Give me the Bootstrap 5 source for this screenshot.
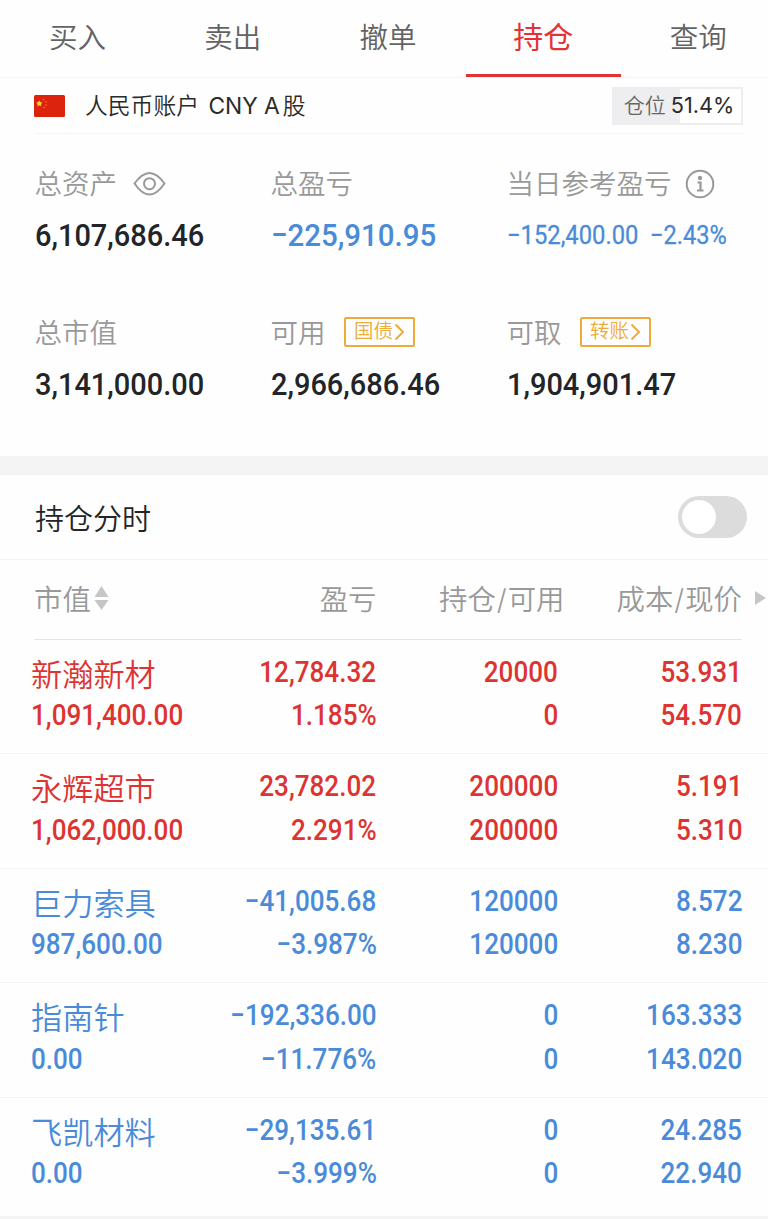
<!DOCTYPE html>
<html lang="zh-CN">
<head>
<meta charset="utf-8">
<meta name="viewport" content="width=device-width, initial-scale=1">
<title>持仓</title>
<link href="https://cdn.jsdelivr.net/npm/bootstrap@5.3.0/dist/css/bootstrap.min.css" rel="stylesheet">
<style>
  :root { --up: #dd3431; --down: #4a8bd9; --rule: #f3f3f3; }
  html, body { overflow: hidden; }
  body { width: 768px; height: 1219px; background: #fefefe; color: #222428; font-family: Inter, "Noto Sans CJK SC", sans-serif; font-weight: 350; }
  .tabs { height: 78px; border-bottom: 1.5px solid #f5f5f5; overflow: hidden; }
  .tabs a { flex: 0 0 155.2px; height: 77.5px; line-height: 75px; font-size: 28.5px; color: #636363; text-align: center; text-decoration: none; border-bottom: 4px solid transparent; }
  .tabs a.on { color: #e33233; border-color: #e33233; font-size: 30px; font-weight: 400; }
  .acct { height: 56px; margin: 0 25px 0 34px; border-bottom: 1.5px solid #f5f5f5; }
  .acct-name { font-size: 22.8px; margin: 2px 0 0 20px; color: #2b2b2b; white-space: nowrap; }
  .acct-name span { letter-spacing: 0; font-weight: 400; margin: 0 3px; }
  .usage { width: 131px; height: 38px; border: 2px solid #eeeef0; font-size: 21px; color: #666; background: linear-gradient(90deg, #eeeef0 66px, #fff 66px); white-space: nowrap; padding-left: 3px; }
  .usage b { font-weight: 400; font-size: 21.7px; color: #2a2a2a; margin-left: 5px; }
  .summary { display: grid; grid-template-columns: 236px 236px 1fr; padding: 0 0 0 34.500px; height: 322px; grid-template-rows: 149px 1fr; }
  .lbl { height: 40px; margin-top: 31px; font-size: 27.5px; color: #999; white-space: nowrap; display: flex; align-items: center; }
  .lbl svg { position: relative; top: -1px; }
  .num { display: inline-block; font-family: Roboto, sans-serif; font-weight: 500; transform: scaleX(.905); transform-origin: left center; white-space: nowrap; }
  .big { height: 40px; line-height: 40px; margin-top: 10px; font-size: 32px; }
  .big .num { display: block; }
  .big.down:not(.mid) .num { transform: scaleX(.92); }
  .mid .num { font-size: 25.5px; font-weight: 400; transform: scaleX(.932); -webkit-text-stroke: .3px currentColor; }
  .mid .pct { margin-left: 3px; transform: scaleX(.925); }
  .chip { font-size: 19.5px; height: 30px; width: 71px; border: 2px solid #edab3c; border-radius: 2px; color: #edab3c; margin: -5px 0 0 18.5px; font-weight: 350; }
  .lbl .chip svg { top: 0; }
  .band { height: 19px; background: #f4f4f4; }
  .timeline { height: 84.5px; padding: 0 21px 0 35px; border-bottom: 1.5px solid var(--rule); font-size: 29px; }
  .timeline .ttl { padding-top: 5px; }
  .toggle { width: 69px; height: 42px; border-radius: 21px; background: #dcdcdc; padding: 4px; }
  .toggle i { display: block; width: 34px; height: 34px; border-radius: 50%; background: #fff; }
  .head, .pos { display: grid; margin-left: 31px; margin-right: 26px; }
  .head { height: 80px; margin-left: 34px; grid-template-columns: 157px 185.500px 188px 177.500px; font-size: 28.4px; color: #999; line-height: 80px; border-bottom: 1px solid #e5e5e5; white-space: nowrap; }
  .head em { font-style: normal; margin: 0 1px; }
  .pos { height: 113.5px; padding-top: 10px; grid-template-columns: 160px 185.500px 181.500px 184px; grid-template-rows: 43.5px 43.5px; line-height: 43.500px; font-size: 28.8px; }
  .wrap-pos { border-bottom: 1.2px solid var(--rule); height: 114.6px; }
  .pos .nm { font-size: 31.2px; position: relative; top: 4px; white-space: nowrap; }
  .pos .text-end .num { transform-origin: right center; }
  .up { color: var(--up); } .down { color: var(--down); }
</style>
</head>
<body>
<nav class="tabs d-flex">
  <a href="#">买入</a><a href="#">卖出</a><a href="#">撤单</a><a href="#" class="on">持仓</a><a href="#">查询</a>
</nav>
<div class="acct d-flex align-items-center">
  <svg width="31" height="22" viewBox="0 0 31 22"><rect width="31" height="22" rx="1.5" fill="#dc230d"/><path fill="#fc3" d="M5.3 5.2l.9 2.3 2.4.1-1.9 1.5.7 2.4-2.1-1.4-2 1.4.6-2.4L2 7.600l2.400-.1z"/><circle cx="5.300" cy="8.500" r="2" fill="#fc3"/><g fill="#f0831e"><circle cx="9.500" cy="4.500" r=".8"/><circle cx="12" cy="6.800" r=".8"/><circle cx="12" cy="10" r=".8"/><circle cx="10" cy="12.500" r=".8"/></g></svg>
  <span class="acct-name">人民币账户 <span>CNY A</span>股</span>
  <div class="usage ms-auto d-flex align-items-center justify-content-center"><span>仓位</span><b>51.4%</b></div>
</div>
<section class="summary">
  <div>
    <div class="lbl">总资产<svg class="ms-3" width="34" height="26" viewBox="0 0 34 26" fill="none" stroke="#999" stroke-width="2"><path d="M1.500 12.500C7 5 11 2 16.500 2S26 5 31.500 12.500C26 20.500 22 23.500 16.500 23.500S7 20.500 1.500 12.500z"/><circle cx="16.500" cy="12.700" r="5.500"/></svg></div>
    <div class="big"><span class="num">6,107,686.46</span></div>
  </div>
  <div>
    <div class="lbl">总盈亏</div>
    <div class="big down"><span class="num">−225,910.95</span></div>
  </div>
  <div>
    <div class="lbl">当日参考盈亏<svg style="margin-left:13px" width="30" height="30" viewBox="0 0 30 30" fill="none" stroke="#999" stroke-width="2"><circle cx="15" cy="15" r="13.300"/><circle cx="15" cy="9" r="2.200" fill="#999" stroke="none"/><path d="M12.500 13.500h3v8M12 21.500h6.500" stroke-width="2.200"/></svg></div>
    <div class="big mid down text-nowrap d-flex"><span class="num">−152,400.00</span><span class="num pct">−2.43%</span></div>
  </div>
  <div>
    <div class="lbl">总市值</div>
    <div class="big"><span class="num">3,141,000.00</span></div>
  </div>
  <div>
    <div class="lbl">可用<span class="chip d-flex align-items-center justify-content-center">国债<svg width="12" height="20" viewBox="0 0 12 20" fill="none" stroke="#edab3c" stroke-width="2"><path d="M2.500 2.500l7.500 7.500-7.500 7.500"/></svg></span></div>
    <div class="big"><span class="num">2,966,686.46</span></div>
  </div>
  <div>
    <div class="lbl">可取<span class="chip d-flex align-items-center justify-content-center">转账<svg width="12" height="20" viewBox="0 0 12 20" fill="none" stroke="#edab3c" stroke-width="2"><path d="M2.500 2.500l7.500 7.500-7.500 7.500"/></svg></span></div>
    <div class="big"><span class="num">1,904,901.47</span></div>
  </div>
</section>
<div class="band"></div>
<div class="timeline d-flex align-items-center justify-content-between"><span class="ttl">持仓分时</span><span class="toggle"><i></i></span></div>
<div class="head">
  <div>市值<svg width="15" height="26" viewBox="0 0 15 26" fill="#c6c6c6" style="margin:-7px 0 0 3px"><path d="M7.500 1l7 11h-14zM7.500 25l7-10h-14z"/></svg></div>
  <div class="text-end">盈亏</div><div class="text-end">持仓<em>/</em>可用</div>
  <div class="text-end position-relative">成本<em>/</em>现价<svg class="position-absolute" style="right:-24px;top:30px" width="11" height="16" viewBox="0 0 11 16" fill="#c6c6c6"><path d="M0 1l11 7-11 7z"/></svg></div>
</div>
<div class="wrap-pos up"><div class="pos">
  <div class="nm">新瀚新材</div><div class="text-end"><span class="num">12,784.32</span></div><div class="text-end"><span class="num">20000</span></div><div class="text-end"><span class="num">53.931</span></div>
  <div><span class="num">1,091,400.00</span></div><div class="text-end"><span class="num">1.185%</span></div><div class="text-end"><span class="num">0</span></div><div class="text-end"><span class="num">54.570</span></div>
</div></div>
<div class="wrap-pos up"><div class="pos">
  <div class="nm">永辉超市</div><div class="text-end"><span class="num">23,782.02</span></div><div class="text-end"><span class="num">200000</span></div><div class="text-end"><span class="num">5.191</span></div>
  <div><span class="num">1,062,000.00</span></div><div class="text-end"><span class="num">2.291%</span></div><div class="text-end"><span class="num">200000</span></div><div class="text-end"><span class="num">5.310</span></div>
</div></div>
<div class="wrap-pos down"><div class="pos">
  <div class="nm">巨力索具</div><div class="text-end"><span class="num">−41,005.68</span></div><div class="text-end"><span class="num">120000</span></div><div class="text-end"><span class="num">8.572</span></div>
  <div><span class="num">987,600.00</span></div><div class="text-end"><span class="num">−3.987%</span></div><div class="text-end"><span class="num">120000</span></div><div class="text-end"><span class="num">8.230</span></div>
</div></div>
<div class="wrap-pos down"><div class="pos">
  <div class="nm">指南针</div><div class="text-end"><span class="num">−192,336.00</span></div><div class="text-end"><span class="num">0</span></div><div class="text-end"><span class="num">163.333</span></div>
  <div><span class="num">0.00</span></div><div class="text-end"><span class="num">−11.776%</span></div><div class="text-end"><span class="num">0</span></div><div class="text-end"><span class="num">143.020</span></div>
</div></div>
<div class="wrap-pos down border-0" style="height:118px"><div class="pos">
  <div class="nm">飞凯材料</div><div class="text-end"><span class="num">−29,135.61</span></div><div class="text-end"><span class="num">0</span></div><div class="text-end"><span class="num">24.285</span></div>
  <div><span class="num">0.00</span></div><div class="text-end"><span class="num">−3.999%</span></div><div class="text-end"><span class="num">0</span></div><div class="text-end"><span class="num">22.940</span></div>
</div></div>
<div class="band"></div>
<script src="https://cdn.jsdelivr.net/npm/bootstrap@5.3.0/dist/js/bootstrap.bundle.min.js"></script>
</body>
</html>
